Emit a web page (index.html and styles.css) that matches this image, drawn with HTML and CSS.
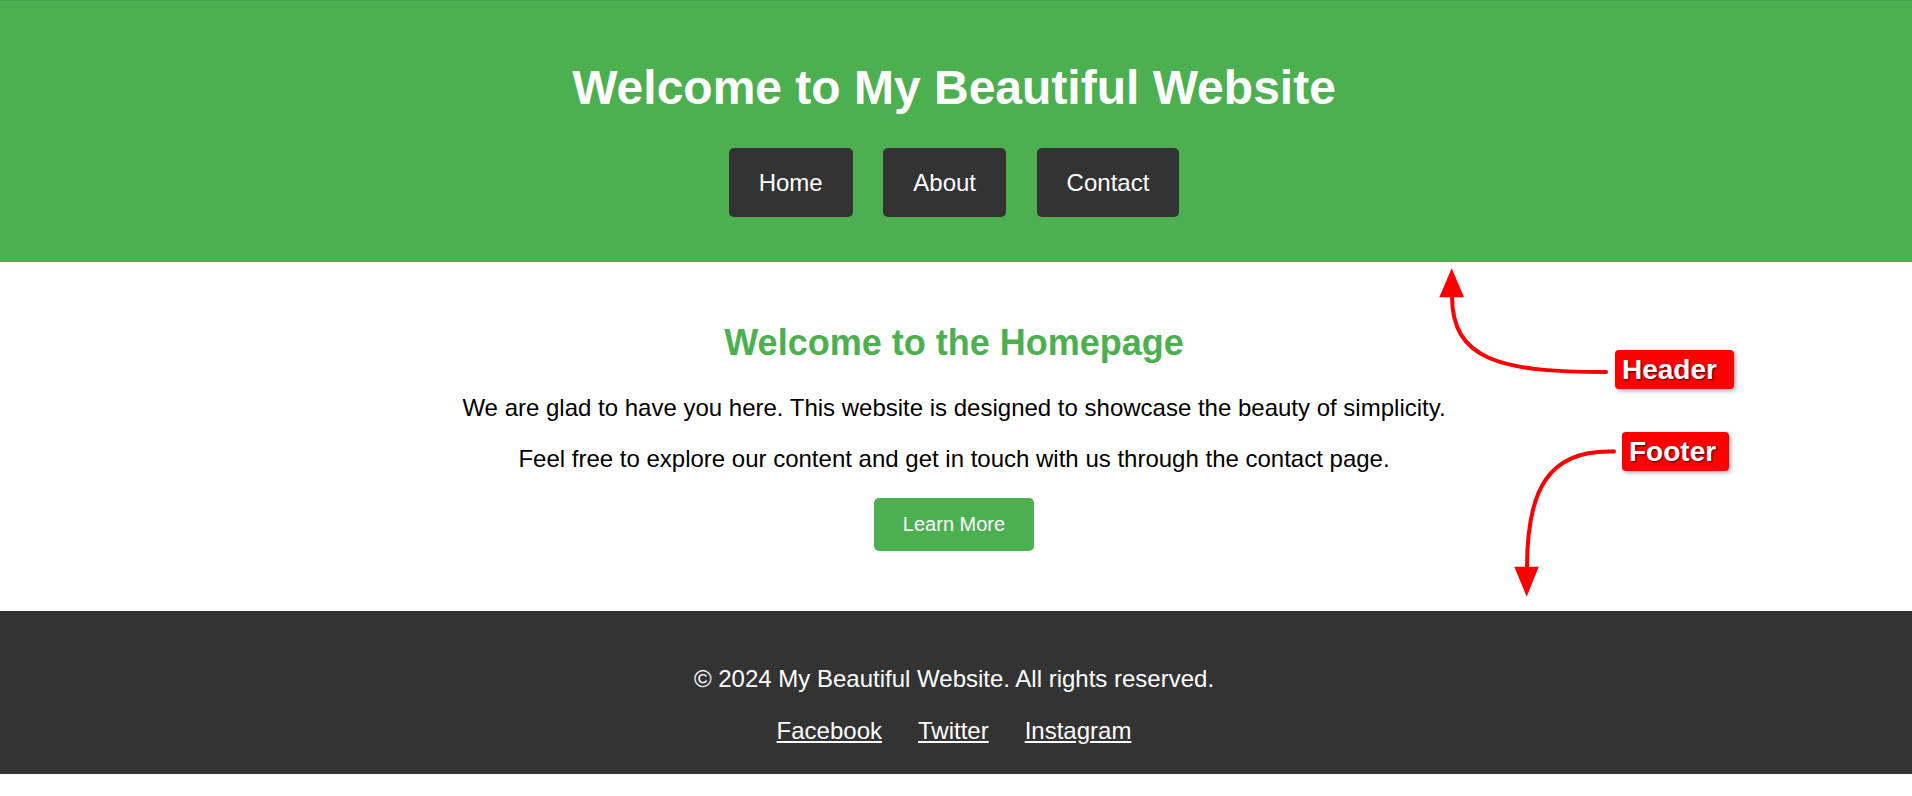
FILE: index.html
```html
<!DOCTYPE html>
<html lang="en">
<head>
<meta charset="utf-8">
<title>My Beautiful Website</title>
<link rel="stylesheet" href="styles.css">
</head>
<body>
<header class="site-header">
  <h1 class="site-title">Welcome to My Beautiful Website</h1>
  <nav class="site-nav">
    <a class="nav-link" href="#">Home</a>
    <a class="nav-link" href="#">About</a>
    <a class="nav-link" href="#">Contact</a>
  </nav>
</header>
<main class="content">
  <h2 class="content-title">Welcome to the Homepage</h2>
  <p class="content-text">We are glad to have you here. This website is designed to showcase the beauty of simplicity.</p>
  <p class="content-text last">Feel free to explore our content and get in touch with us through the contact page.</p>
  <div class="cta-row"><a class="cta" href="#">Learn More</a></div>
</main>
<footer class="site-footer">
  <p class="copyright">&copy; 2024 My Beautiful Website. All rights reserved.</p>
  <div class="social">
    <a class="social-link" href="#">Facebook</a>
    <a class="social-link" href="#">Twitter</a>
    <a class="social-link" href="#">Instagram</a>
  </div>
</footer>

<svg class="annotations" width="1912" height="796" viewBox="0 0 1912 796" aria-hidden="true">
  <path d="M1606 372 C1500 372 1452 360 1452 296" fill="none" stroke="#ff0000" stroke-width="4" stroke-linecap="round"/>
  <polygon points="1451.7,268.3 1439.3,297.3 1464,297.3" fill="#ff0000"/>
  <path d="M1614 451.5 C1548 449 1527 490 1527 568" fill="none" stroke="#ff0000" stroke-width="4" stroke-linecap="round"/>
  <polygon points="1514.3,566.7 1538.7,566.7 1526.7,596.7" fill="#ff0000"/>
</svg>
<div class="tag tag-header">Header</div>
<div class="tag tag-footer">Footer</div>
</body>
</html>
```

FILE: styles.css
```css
html, body {
  margin: 0;
  padding: 0;
}

body {
  position: relative;
  font-family: "Liberation Sans", Arial, Helvetica, sans-serif;
  font-size: 24px;
  color: #000;
  background: #fff;
  min-height: 796px;
}

.site-header {
  background: #4caf50;
  border-top: 1px solid #449d48;
  padding: 58.8px 4px 45.3px 0;
  text-align: center;
}

.site-title {
  margin: 0 0 32.7px;
  font-size: 48px;
  font-weight: bold;
  color: #fff;
  line-height: 55.2px;
}

.site-nav {
  display: flex;
  justify-content: center;
  gap: 30.6px;
}

.nav-link {
  display: block;
  background: #333;
  color: #fff;
  text-decoration: none;
  padding: 21px 30px;
  line-height: 27.3px;
  border-radius: 5px;
}

.content {
  padding: 59.5px 4px 60.3px 0;
  text-align: center;
}

.content-title {
  margin: 0 0 30.7px;
  font-size: 36px;
  font-weight: bold;
  color: #4caf50;
  line-height: 41.4px;
}

.content-text {
  margin: 0 0 24px;
  line-height: 27.6px;
}

.content-text.last {
  margin-bottom: 25.2px;
}

.cta-row {
  display: flex;
  justify-content: center;
}

.cta {
  display: block;
  background: #4caf50;
  color: #fff;
  text-decoration: none;
  font-size: 20px;
  line-height: 22.7px;
  padding: 15px 29px;
  border-radius: 5px;
}

.site-footer {
  background: #333;
  color: #fff;
  padding: 30px 4px 30px 0;
  text-align: center;
}

.copyright {
  margin: 24px 0;
  line-height: 27.6px;
}

.social {
  display: flex;
  justify-content: center;
  gap: 36px;
  line-height: 27.6px;
}

.social-link {
  color: #fff;
  text-decoration: underline;
}

.annotations {
  position: absolute;
  left: 0;
  top: 0;
  pointer-events: none;
}

.tag {
  position: absolute;
  background: #ff0000;
  color: #fff;
  font-weight: bold;
  font-size: 28px;
  line-height: 39px;
  height: 39px;
  padding-left: 7px;
  box-sizing: border-box;
  border-radius: 4px;
  box-shadow: 2px 2px 4px rgba(0, 0, 0, 0.3);
  text-shadow: 1px 1px 2px rgba(0, 0, 0, 0.75);
  white-space: nowrap;
}

.tag-header {
  left: 1615px;
  top: 350px;
  width: 119px;
}

.tag-footer {
  left: 1622px;
  top: 432px;
  width: 107px;
}
```
